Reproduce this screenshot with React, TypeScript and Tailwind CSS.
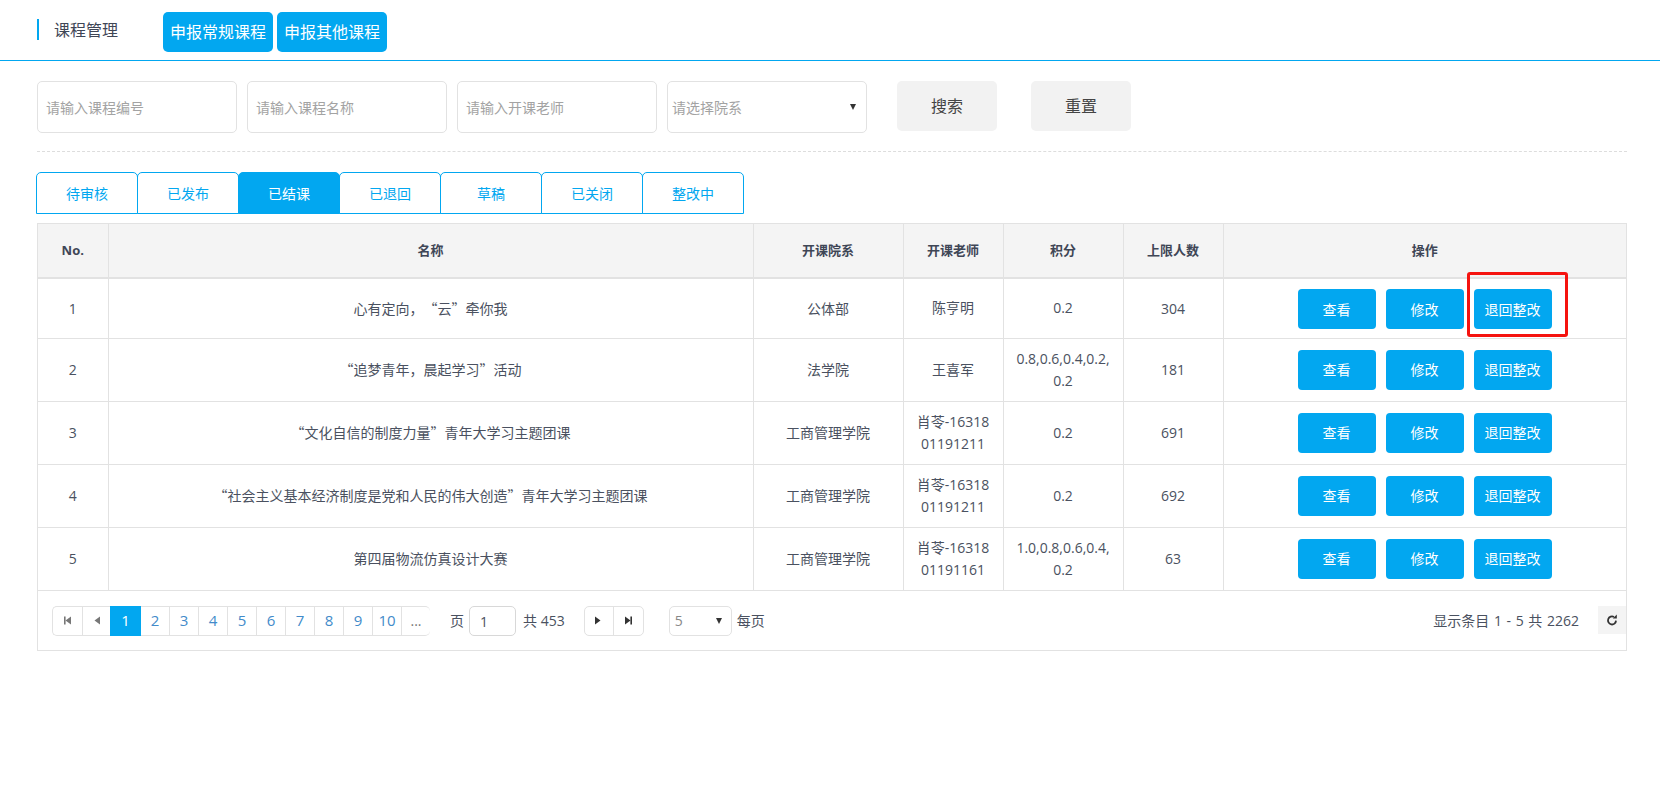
const FONT = "font-['Open_Sans','Noto_Sans_CJK_SC',sans-serif]";
const CJK = "font-['Noto_Sans_CJK_SC',sans-serif] [text-spacing-trim:space-all]";

const tabs = ['待审核', '已发布', '已结课', '已退回', '草稿', '已关闭', '整改中'];

const rows = [
  { no: 1, name: '心有定向，“云”牵你我', dept: '公体部', teacher: ['陈亨明'], score: ['0.2'], limit: 304, h: 'h-[60px]', marked: true },
  { no: 2, name: '“追梦青年，晨起学习”活动', dept: '法学院', teacher: ['王喜军'], score: ['0.8,0.6,0.4,0.2,', '0.2'], limit: 181, h: 'h-[63px]' },
  { no: 3, name: '“文化自信的制度力量”青年大学习主题团课', dept: '工商管理学院', teacher: ['肖苓-16318', '01191211'], score: ['0.2'], limit: 691, h: 'h-[63px]' },
  { no: 4, name: '“社会主义基本经济制度是党和人民的伟大创造”青年大学习主题团课', dept: '工商管理学院', teacher: ['肖苓-16318', '01191211'], score: ['0.2'], limit: 692, h: 'h-[63px]' },
  { no: 5, name: '第四届物流仿真设计大赛', dept: '工商管理学院', teacher: ['肖苓-16318', '01191161'], score: ['1.0,0.8,0.6,0.4,', '0.2'], limit: 63, h: 'h-[63px]' },
];

function TextField({ placeholder }: { placeholder: string }) {
  return (
    <div className="w-[200px] h-[52px] border border-[#e2e2e2] rounded-[5px] flex items-center pl-[8px] text-[14px] text-[#a3a3a3]">
      {placeholder}
    </div>
  );
}

function ActionButton({ label }: { label: string }) {
  return (
    <button className="w-[78px] h-[40px] bg-[#02a7f0] rounded-[4px] text-white text-[14px] shrink-0">{label}</button>
  );
}

function Tri({ dir, bar }: { dir: 'l' | 'r'; bar?: boolean }) {
  return (
    <svg width="9" height="9" viewBox="0 0 9 9" fill="currentColor">
      {dir === 'l' ? <path d="M8 .5v8L2.5 4.5z" /> : <path d="M1 .5v8l5.5-4z" />}
      {bar && (dir === 'l' ? <rect x="1" y=".5" width="1.6" height="8" /> : <rect x="6.4" y=".5" width="1.6" height="8" />)}
    </svg>
  );
}

function RefreshIcon() {
  return (
    <svg width="12" height="12" viewBox="0 0 12 12" fill="none">
      <path d="M8 3A4 4 0 1 0 10 6.6" stroke="currentColor" strokeWidth="1.8" />
      <path d="M10.8 .6v4H6.8z" fill="currentColor" />
    </svg>
  );
}

export default function App() {
  return (
    <div className={`w-[1660px] h-[797px] bg-white text-[#4a5160] ${FONT}`}>
      {/* Header */}
      <div className="h-[61px] border-b border-[#02a7f0] flex items-start pl-[37px] box-border">
        <div className="mt-[19px] h-[21px] border-l-2 border-[#02a7f0] pl-[15px] w-[126px] text-[16px] leading-[22px] text-[#3f4656]">课程管理</div>
        <div className="mt-3 flex gap-1">
          <button className="w-[110px] h-[40px] rounded-[5px] bg-[#02a7f0] text-white text-[16px]">申报常规课程</button>
          <button className="w-[110px] h-[40px] rounded-[5px] bg-[#02a7f0] text-white text-[16px]">申报其他课程</button>
        </div>
      </div>

      <div className="w-[1590px] ml-[37px]">
        {/* Search bar */}
        <div className="flex mt-5 gap-[10px]">
          <TextField placeholder="请输入课程编号" />
          <TextField placeholder="请输入课程名称" />
          <TextField placeholder="请输入开课老师" />
          <div className="w-[200px] h-[52px] border border-[#e2e2e2] rounded-[5px] flex items-center justify-between pl-[4px] pr-[10px] text-[14px] text-[#a3a3a3]">
            请选择院系
            <span className="w-0 h-0 border-x-[3.5px] border-x-transparent border-t-[6px] border-t-[#333]" />
          </div>
          <button className="ml-5 w-[100px] h-[50px] bg-[#f2f2f2] rounded-[5px] text-[16px] text-[#444]">搜索</button>
          <button className="ml-6 w-[100px] h-[50px] bg-[#f2f2f2] rounded-[5px] text-[16px] text-[#444]">重置</button>
        </div>

        <div className="mt-[18px] border-t border-dashed border-[#dddddd]" />

        {/* Status tabs */}
        <div className="flex mt-5 -ml-px">
          {tabs.map((tab, i) => (
            <div
              key={tab}
              className={`w-[102px] h-[42px] flex items-center justify-center text-[14px] border border-[#02a7f0] rounded-t-[5px] ${i > 0 ? '-ml-px' : ''} ${i === 2 ? 'bg-[#02a7f0] text-white' : 'text-[#02a7f0]'}`}
            >
              {tab}
            </div>
          ))}
        </div>

        {/* Table */}
        <div className="mt-[9px] border border-[#e2e2e2] h-[428px]">
          <table className="w-full table-fixed border-collapse text-[14px]">
            <colgroup>
              <col className="w-[70px]" />
              <col className="w-[645px]" />
              <col className="w-[150px]" />
              <col className="w-[100px]" />
              <col className="w-[120px]" />
              <col className="w-[100px]" />
              <col />
            </colgroup>
            <thead>
              <tr className="h-[54px] bg-[#f4f4f4] border-b-2 border-[#e2e2e2] text-[#3f4656]">
                {['No.', '名称', '开课院系', '开课老师', '积分', '上限人数', '操作'].map((title, i) => (
                  <th key={title} className={`font-bold text-[13px] ${i > 0 ? 'border-l border-[#e2e2e2]' : ''}`}>{title}</th>
                ))}
              </tr>
            </thead>
            <tbody>
              {rows.map((row) => (
                <tr key={row.no} className={`${row.h} border-b border-[#e2e2e2] text-center`}>
                  <td>{row.no}</td>
                  <td className={`border-l border-[#e2e2e2] ${CJK}`}>{row.name}</td>
                  <td className="border-l border-[#e2e2e2]">{row.dept}</td>
                  <td className="border-l border-[#e2e2e2] leading-[22px]">
                    {row.teacher.map((line) => <div key={line}>{line}</div>)}
                  </td>
                  <td className="border-l border-[#e2e2e2] leading-[22px]">
                    {row.score.map((line) => <div key={line}>{line}</div>)}
                  </td>
                  <td className="border-l border-[#e2e2e2]">{row.limit}</td>
                  <td className={`border-l border-[#e2e2e2] pl-[74px] ${row.marked ? 'pt-[2px]' : ''}`}>
                    <div className="flex gap-[10px]">
                      <ActionButton label="查看" />
                      <ActionButton label="修改" />
                      <div className="relative">
                        <ActionButton label="退回整改" />
                        {row.marked && (
                          <div className="absolute -left-[7px] -top-[17px] w-[101px] h-[65px] border-[3px] border-[#f5130f] rounded-[3px]" />
                        )}
                      </div>
                    </div>
                  </td>
                </tr>
              ))}
            </tbody>
          </table>

          {/* Pagination */}
          <div className="flex items-center pl-[14px] mt-[15px] text-[14px]">
            <div className="flex h-[30px] border border-[#e2e2e2] rounded-[5px] border-r-0">
              <div className="w-[30px] flex items-center justify-center border-r border-[#e2e2e2] text-[#777]"><Tri dir="l" bar /></div>
              <div className="w-[27px] flex items-center justify-center text-[#777]"><Tri dir="l" /></div>
              <div className="w-[31px] -my-px flex items-center justify-center bg-[#02a7f0] text-white text-[15px] h-[30px]">1</div>
              {[2, 3, 4, 5, 6, 7, 8, 9, 10].map((n) => (
                <div key={n} className="w-[29px] flex items-center justify-center border-r border-[#e2e2e2] text-[#428bca] text-[15px]">{n}</div>
              ))}
              <div className="w-[28px] flex items-center justify-center text-[#777]">...</div>
            </div>
            <span className="ml-5">页</span>
            <div className="ml-[5px] w-[47px] h-[30px] border border-[#d8d8d8] rounded-[5px] flex items-center pl-[10px] pt-px">1</div>
            <span className="ml-[7px]">共 453</span>
            <div className="ml-[19px] flex h-[30px] border border-[#e2e2e2] rounded-[5px] text-[#333]">
              <div className="w-[29px] flex items-center justify-center border-r border-[#e2e2e2]"><Tri dir="r" /></div>
              <div className="w-[29px] flex items-center justify-center"><Tri dir="r" bar /></div>
            </div>
            <div className="ml-[25px] w-[63px] h-[30px] border border-[#e2e2e2] rounded-[5px] flex items-center justify-between pl-[5px] pr-[9px] text-[#888]">
              5
              <span className="w-0 h-0 border-x-[3.5px] border-x-transparent border-t-[6px] border-t-[#333]" />
            </div>
            <span className="ml-[5px]">每页</span>
            <span className="ml-auto mr-[19px] [word-spacing:1px]">显示条目 1 - 5 共 2262</span>
            <div className="w-[28px] h-[28px] self-start bg-[#f4f4f4] flex items-center justify-center text-[#333]">
              <RefreshIcon />
            </div>
          </div>
        </div>
      </div>
    </div>
  );
}
